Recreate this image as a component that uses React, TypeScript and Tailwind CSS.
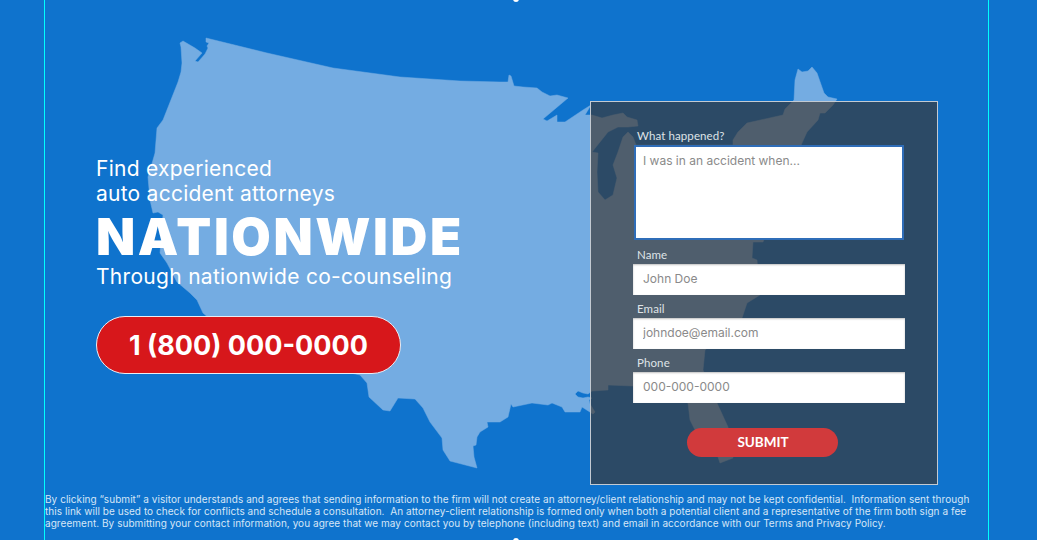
const inter = "font-['Inter',sans-serif]";

const mapPath =
  'M206 38 L267 53 L333 68 L400 77 L460 81 L500 82 L508 82 L509 75 L511 76 L514 86 L523 87 L537 88 L542 92 L550 96 L557 95 L568 98 L543 119 L547 121 L557 115 L557 122 L565 122 L583 110 L591 105 L585 115 L592 115 L602 118 L613 115 L623 113 L627 117 L637 120 L638 126 L628 127 L618 127 L608 132 L592 152 L598 153 L597 172 L598 192 L605 200 L613 195 L617 178 L613 165 L618 152 L623 137 L628 132 L633 137 L636 145 L733 145 L733 140 L738 132 L747 123 L783 115 L785 109 L794 100 L795 80 L798 69 L802 72 L808 71 L812 67 L817 73 L824 93 L828 97 L837 99 L833 105 L825 113 L820 113 L818 120 L807 132 L802 143 L763 242 L753 242 L752 258 L757 260 L760 295 L747 303 L742 318 L705 350 L703 370 L717 403 L728 427 L733 458 L720 463 L718 457 L708 445 L695 430 L690 420 L688 403 L633 386 L608 385 L608 390 L592 391 L588 394 L583 393 L578 391 L575 394 L578 397 L583 398 L588 397 L592 398 L589 400 L590 404 L595 412 L593 414 L582 407 L580 412 L565 412 L562 407 L552 403 L548 405 L532 403 L513 407 L511 404 L508 417 L500 422 L487 422 L488 427 L480 432 L477 437 L476 445 L473 446 L474 457 L477 468 L450 461 L443 450 L442 438 L430 422 L423 408 L415 399 L398 398 L390 411 L383 410 L369 397 L367 383 L360 375 L300 362 L240 345 L203 313 L197 300 L190 293 L177 282 L167 263 L160 253 L163 215 L158 212 L153 213 L150 200 L148 177 L153 160 L155 153 L157 128 L163 120 L178 82 L181 72 L182 63 L181 47 L180 43 L183 41 L195 48 L202 53 L195 61 L198 62 L205 54 L208 48 L207 46 L209 43 L206 42 Z';

const fields = [
  { label: 'Name', placeholder: 'John Doe' },
  { label: 'Email', placeholder: 'johndoe@email.com' },
  { label: 'Phone', placeholder: '000-000-0000' },
];

function UsaMap() {
  return (
    <svg className="absolute inset-0" width="1037" height="540" viewBox="0 0 1037 540">
      <path d={mapPath} fill="#74ace2" stroke="#74ace2" strokeWidth="0.5" strokeLinejoin="round" />
    </svg>
  );
}

function ContactForm() {
  return (
    <form className="ml-auto mr-[50px] flex h-[384px] w-[348px] flex-col border border-[#c3cad2] bg-[#3c342e]/65 pl-[42px] pr-[32px] pt-[27px]">
      <label className="ml-[4px] text-[11.5px] leading-[14px] tracking-[0.1px] text-[#dfe3e7] font-['Lato',sans-serif]">What happened?</label>
      <textarea
        placeholder="I was in an accident when..."
        className={`mt-[2px] ml-[1px] h-[95px] w-[270px] resize-none border-2 border-[#2f6db8] bg-white px-[7px] py-[5px] text-[12px] text-[#555] outline-none placeholder:text-[#8a8a8a] ${inter}`}
      />
      {fields.map((field, index) => (
        <div key={field.label} className={index === 0 ? 'mt-[8px]' : 'mt-[7px]'}>
          <label className="ml-[4px] block pb-[2px] text-[11.5px] leading-[14px] tracking-[0.1px] text-[#dfe3e7] font-['Lato',sans-serif]">{field.label}</label>
          <input
            placeholder={field.placeholder}
            className={`h-[31px] w-[272px] bg-white px-[10px] pb-[2px] text-[12px] shadow-[inset_0_1px_2px_rgba(0,0,0,0.25)] outline-none placeholder:text-[#8a8a8a] ${inter}`}
          />
        </div>
      ))}
      <button
        type="button"
        className="ml-[54px] mt-[25px] h-[29px] w-[151px] rounded-full bg-[#d13a3c] pb-[1px] pl-[1px] text-[13.5px] font-bold text-white font-['Lato',sans-serif]"
      >
        SUBMIT
      </button>
    </form>
  );
}

export default function App() {
  return (
    <div className="relative h-[540px] w-[1037px] overflow-hidden bg-[#0f73cd]">
      <UsaMap />
      {/* handles of the editor, top and bottom */}
      <div className="absolute left-[513px] top-[-4px] h-[6px] w-[6px] rounded-full bg-white" />
      <div className="absolute left-[513px] top-[538px] h-[6px] w-[6px] rounded-full bg-white" />

      <div className="relative ml-[44px] flex h-full w-[945px] flex-col border-x border-[#00ffff] pt-[101px]">
        <div className="flex">
          <div className={`ml-[51px] pt-[55px] text-white ${inter}`}>
            <p className="text-[21px] leading-[25px] tracking-[0.25px]">
              Find experienced
              <br />
              auto accident attorneys
            </p>
            <h1 className="mb-[5px] mt-[8px] text-[51px] font-black leading-[46px] tracking-[2.6px]">NATIONWIDE</h1>
            <p className="text-[21px] leading-[24px] tracking-[0.3px]">Through nationwide co-counseling</p>
            <a className="mt-[27px] flex h-[58px] w-[305px] items-center justify-center rounded-full border border-[#e8eef5] bg-[#d7171b] pt-[2px] text-[27px] font-bold">
              1 (800) 000-0000
            </a>
          </div>
          <ContactForm />
        </div>
        <p className={`mt-[8px] w-[935px] text-[10px] leading-[12px] tracking-[0.05px] text-[#d5e6f7] ${inter}`}>
          By clicking “submit” a visitor understands and agrees that sending information to the firm will not create an attorney/client relationship and may not be kept confidential.&nbsp; Information sent through this link will be used to check for conflicts and schedule a consultation.&nbsp; An attorney-client relationship is formed only when both a potential client and a representative of the firm both sign a fee agreement. By submitting your contact information, you agree that we may contact you by telephone (including text) and email in accordance with our Terms and Privacy Policy.
        </p>
      </div>
    </div>
  );
}
